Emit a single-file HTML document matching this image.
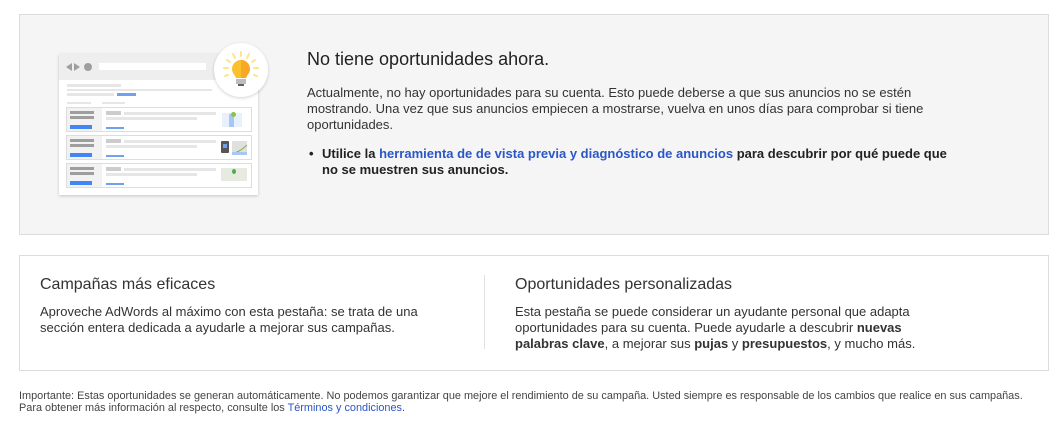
<!DOCTYPE html>
<html><head><meta charset="utf-8"><style>
*{margin:0;padding:0;box-sizing:border-box}
body{width:1061px;height:433px;background:#fff;font-family:"Liberation Sans",Arial,sans-serif;color:#222;position:relative;overflow:hidden}
.a{position:absolute;white-space:nowrap}
.t{font-size:13px;line-height:16px;color:#333}
a{color:#2a56c6;text-decoration:none}
.g{position:absolute;background:#e6e6e6}
</style></head><body>
<div class="a" style="left:19px;top:14px;width:1030px;height:221px;background:#f5f5f5;border:1px solid #dcdcdc"></div>

<div class="a" style="left:59px;top:54px;width:199px;height:141px;background:#fff;box-shadow:0 1px 3px rgba(0,0,0,.2)"></div>
<div class="a" style="left:59px;top:54px;width:199px;height:26px;background:#eee"></div>
<svg class="a" style="left:64px;top:61px" width="36" height="12"><polygon points="2,6 8,2 8,10" fill="#9e9e9e"/><polygon points="16,6 10,2 10,10" fill="#9e9e9e"/><circle cx="24" cy="6" r="4" fill="#9e9e9e"/></svg>
<div class="a" style="left:99px;top:63px;width:107px;height:7px;background:#fff"></div>
<div class="g" style="left:67px;top:84px;width:54px;height:3px"></div>
<div class="g" style="left:67px;top:89px;width:145px;height:2px"></div>
<div class="g" style="left:67px;top:93px;width:47px;height:3px"></div>
<div class="a" style="left:117px;top:93px;width:19px;height:3px;background:#6fa1ec"></div>
<div class="g" style="left:67px;top:102px;width:24px;height:2px"></div>
<div class="g" style="left:102px;top:102px;width:23px;height:2px"></div>

<div class="a" style="left:66px;top:107px;width:186px;height:25px;border:1px solid #ddd;background:#fff"></div>
<div class="a" style="left:67px;top:108px;width:35px;height:23px;background:#f2f2f2"></div>
<div class="a" style="left:70px;top:111px;width:24px;height:3px;background:#9e9e9e"></div>
<div class="a" style="left:70px;top:116px;width:24px;height:3px;background:#9e9e9e"></div>
<div class="a" style="left:70px;top:125px;width:22px;height:4px;background:#4285f4"></div>
<div class="a" style="left:106px;top:111px;width:15px;height:4px;background:#ccc"></div>
<div class="g" style="left:124px;top:112px;width:92px;height:3px"></div>
<div class="g" style="left:106px;top:117px;width:91px;height:3px"></div>
<div class="a" style="left:106px;top:127px;width:18px;height:2px;background:#6fa1ec"></div>
<div class="a" style="left:222px;top:113px;width:20px;height:14px;background:#e8f0fc"></div>
<div class="a" style="left:229px;top:114px;width:5px;height:13px;background:#a8c7f5"></div>
<div class="a" style="left:231px;top:112px;width:5px;height:5px;background:#8bc34a;border-radius:50%"></div>

<div class="a" style="left:66px;top:135px;width:186px;height:25px;border:1px solid #ddd;background:#fff"></div>
<div class="a" style="left:67px;top:136px;width:35px;height:23px;background:#f2f2f2"></div>
<div class="a" style="left:70px;top:139px;width:24px;height:3px;background:#9e9e9e"></div>
<div class="a" style="left:70px;top:144px;width:24px;height:3px;background:#9e9e9e"></div>
<div class="a" style="left:70px;top:153px;width:22px;height:4px;background:#4285f4"></div>
<div class="a" style="left:106px;top:139px;width:15px;height:4px;background:#ccc"></div>
<div class="g" style="left:124px;top:140px;width:92px;height:3px"></div>
<div class="g" style="left:106px;top:145px;width:91px;height:3px"></div>
<div class="a" style="left:106px;top:155px;width:18px;height:2px;background:#6fa1ec"></div>
<div class="a" style="left:221px;top:141px;width:8px;height:12px;background:#555;border-radius:1px"></div>
<div class="a" style="left:223px;top:144px;width:4px;height:4px;background:#6fa1ec"></div>
<div class="a" style="left:232px;top:141px;width:15px;height:13px;background:#e0e0e0"></div>
<svg class="a" style="left:232px;top:143px" width="16" height="12"><polyline points="0,11 5,9 9,7 15,2" stroke="#7cb342" fill="none"/><rect x="0" y="9" width="15" height="3" fill="#a8c7f5"/></svg>

<div class="a" style="left:66px;top:163px;width:186px;height:25px;border:1px solid #ddd;background:#fff"></div>
<div class="a" style="left:67px;top:164px;width:35px;height:23px;background:#f2f2f2"></div>
<div class="a" style="left:70px;top:167px;width:24px;height:3px;background:#9e9e9e"></div>
<div class="a" style="left:70px;top:172px;width:24px;height:3px;background:#9e9e9e"></div>
<div class="a" style="left:70px;top:181px;width:22px;height:4px;background:#4285f4"></div>
<div class="a" style="left:106px;top:167px;width:15px;height:4px;background:#ccc"></div>
<div class="g" style="left:124px;top:168px;width:92px;height:3px"></div>
<div class="g" style="left:106px;top:173px;width:91px;height:3px"></div>
<div class="a" style="left:106px;top:183px;width:18px;height:2px;background:#6fa1ec"></div>
<div class="a" style="left:221px;top:168px;width:26px;height:13px;background:#e7eadf"></div>
<div class="a" style="left:232px;top:169px;width:4px;height:5px;background:#4caf50;border-radius:50%"></div>

<div class="a" style="left:214px;top:43px;width:54px;height:54px;border-radius:50%;background:#fff;box-shadow:0 1px 3px rgba(0,0,0,.18)"></div>
<svg class="a" style="left:214px;top:43px" width="54" height="54">
<g stroke="#fde68a" stroke-width="2" stroke-linecap="round">
<line x1="27" y1="9" x2="27" y2="13"/><line x1="19" y1="11" x2="21" y2="15"/><line x1="35" y1="11" x2="33" y2="15"/>
<line x1="13" y1="17" x2="16" y2="19"/><line x1="41" y1="17" x2="38" y2="19"/><line x1="10" y1="25" x2="14" y2="25"/><line x1="44" y1="25" x2="40" y2="25"/>
<line x1="11" y1="33" x2="14" y2="32"/><line x1="43" y1="33" x2="40" y2="32"/></g>
<path d="M27 17 a9 9 0 0 1 9 9 c0 4-3 6-4 9 h-10 c-1-3-4-5-4-9 a9 9 0 0 1 9-9z" fill="#fbc02d"/>
<path d="M27 17 a9 9 0 0 1 9 9 c0 4-3 6-4 9 h-5z" fill="#f9a825"/>
<rect x="22" y="36" width="10" height="5" fill="#bdbdbd"/><rect x="24" y="41" width="6" height="2" fill="#616161"/>
</svg>

<div class="a" style="left:307px;top:49px;font-size:18px;color:#222">No tiene oportunidades ahora.</div>
<div class="a t" style="left:307px;top:85px">Actualmente, no hay oportunidades para su cuenta. Esto puede deberse a que sus anuncios no se estén<br>mostrando. Una vez que sus anuncios empiecen a mostrarse, vuelva en unos días para comprobar si tiene<br>oportunidades.</div>
<div class="a t" style="left:309px;top:146px;font-weight:bold;color:#222">•</div>
<div class="a t" style="left:322px;top:146px;font-weight:bold;color:#222">Utilice la <a>herramienta de de vista previa y diagnóstico de anuncios</a> para descubrir por qué puede que<br>no se muestren sus anuncios.</div>

<div class="a" style="left:19px;top:255px;width:1030px;height:116px;border:1px solid #dcdcdc"></div>
<div class="a" style="left:484px;top:275px;width:1px;height:74px;background:#e0e0e0"></div>
<div class="a" style="left:40px;top:276px;font-size:16px;color:#333">Campañas más eficaces</div>
<div class="a t" style="left:40px;top:304px">Aproveche AdWords al máximo con esta pestaña: se trata de una<br>sección entera dedicada a ayudarle a mejorar sus campañas.</div>
<div class="a" style="left:515px;top:276px;font-size:16px;color:#333">Oportunidades personalizadas</div>
<div class="a t" style="left:515px;top:304px">Esta pestaña se puede considerar un ayudante personal que adapta<br>oportunidades para su cuenta. Puede ayudarle a descubrir <b>nuevas</b><br><b>palabras clave</b>, a mejorar sus <b>pujas</b> y <b>presupuestos</b>, y mucho más.</div>

<div class="a" style="left:19px;top:390px;font-size:10.9px;line-height:12px;color:#444">Importante: Estas oportunidades se generan automáticamente. No podemos garantizar que mejore el rendimiento de su campaña. Usted siempre es responsable de los cambios que realice en sus campañas.<br>Para obtener más información al respecto, consulte los <a>Términos y condiciones</a>.</div>
</body></html>
